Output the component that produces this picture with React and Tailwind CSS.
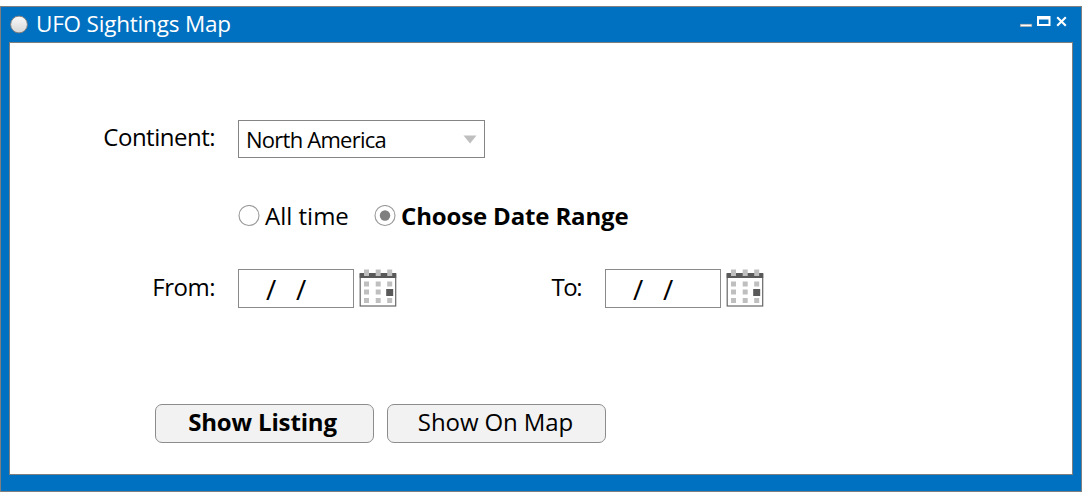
import React from "react";

function CalendarIcon() {
  return (
    <svg width="38" height="39" viewBox="0 0 38 39" className="ml-[5px] block shrink-0">
      <rect x="1.2" y="5" width="35.5" height="32" fill="#fff" stroke="#666" strokeWidth="1.2" />
      <rect x="0.7" y="4" width="36.5" height="5" fill="#595959" />
      {[5, 16.7, 28.2].map((x) => (
        <React.Fragment key={x}>
          <rect x={x} y="0.5" width="5" height="6.5" fill="#bfbfbf" />
          {[12.5, 20.5, 29].map((y) => (
            <rect key={y} x={x} y={y} width="5" height="5" fill="#bfbfbf" />
          ))}
        </React.Fragment>
      ))}
      <rect x="27.2" y="20" width="7" height="7" fill="#595959" />
    </svg>
  );
}

function DateField() {
  return (
    <div className="flex h-[39px]">
      <div className="flex h-[39px] w-[116px] border border-[#8a8a8a] bg-white pl-[27px] pt-[3px] text-[28px] leading-[32px]">
        <span className="w-[30px]">/</span>
        <span>/</span>
      </div>
      <CalendarIcon />
    </div>
  );
}

function Radio({ checked }) {
  return (
    <svg width="22" height="22" viewBox="0 0 22 22" className="block shrink-0">
      <circle cx="11" cy="10.5" r="10" fill="#fff" stroke="#999" strokeWidth="1.1" />
      {checked && <circle cx="11" cy="10.5" r="5.2" fill="#7f7f7f" />}
    </svg>
  );
}

export default function App() {
  return (
    <div className="h-[492px] w-[1082px] overflow-hidden bg-white pt-[6px] font-['Open_Sans','Noto_Sans',sans-serif] text-[24px] leading-8 whitespace-nowrap text-black">
      <div className="flex h-[486px] flex-col border border-[#7f7f7f] bg-[#0070c0] px-2 pb-[16px]">
        <header className="flex h-[35px] shrink-0 items-center">
          <svg width="20" height="20" viewBox="0 0 20 20" className="block shrink-0">
            <defs>
              <linearGradient id="orb" x1="0" y1="0" x2="0" y2="1">
                <stop offset="0" stopColor="#fafafa" />
                <stop offset="1" stopColor="#d6d6d6" />
              </linearGradient>
            </defs>
            <circle cx="10" cy="9.5" r="8.4" fill="url(#orb)" stroke="#7f7f7f" />
          </svg>
          <h1 className="ml-[7px] h-[34px] text-[22.5px] tracking-[-0.2px] text-white">UFO Sightings Map</h1>
          <svg width="50" height="16" viewBox="1019 14 50 16" className="mr-[4px] mb-[5px] ml-auto block">
            <rect x="1020.3" y="24.2" width="11.5" height="2.4" fill="#fff" stroke="#a8a29c" strokeWidth="0.6" />
            <path d="M1037 16h13.500v10h-13.500zM1039 19.500v4.500h9.500v-4.500z" fill="#fff" fillRule="evenodd" />
            <path d="M1057.200 17.200l8.600 8.600M1065.800 17.200l-8.600 8.600" stroke="#fff" strokeWidth="2.1" />
          </svg>
        </header>
        <main className="flex-1 border border-[#7f7f7f] bg-white pt-[77px]">
          <div className="flex h-[38px]">
            <div className="w-[205px] pt-[1px] text-right tracking-[-0.5px]">Continent:</div>
            <div className="ml-[23px] flex h-[38px] w-[247px] items-center justify-between border border-[#858585] pr-[7px] pl-[7px] text-[22px]">
              <span className="pb-[1px] tracking-[-0.75px]">North America</span>
              <svg width="14" height="9" viewBox="0 0 14 9" className="block">
                <path d="M0.5 0.5h13L7 8.500z" fill="#bfbfbf" />
              </svg>
            </div>
          </div>
          <div className="mt-[42px] ml-[228px] flex h-8 items-center">
            <Radio />
            <span className="ml-[5px] w-[109px]">All time</span>
            <Radio checked />
            <span className="ml-[5px] font-bold tracking-[-0.15px]">Choose Date Range</span>
          </div>
          <div className="mt-[37px] flex h-[39px]">
            <div className="w-[205px] pt-[2px] text-right tracking-[-0.5px]">From:</div>
            <div className="ml-[23px]"><DateField /></div>
            <div className="w-[184px] pt-[2px] text-right tracking-[-1.5px]">To:</div>
            <div className="ml-[24px]"><DateField /></div>
          </div>
          <div className="mt-[96px] ml-[145px] flex gap-[13px]">
            <button className="h-[39px] w-[219px] rounded-[7px] border border-[#8c8c8c] bg-[#f2f2f2] pr-1 pb-[3px] font-bold leading-8 tracking-[-0.15px]">Show Listing</button>
            <button className="h-[39px] w-[219px] rounded-[7px] border border-[#8c8c8c] bg-[#f2f2f2] pr-[2px] pb-[3px] leading-8 tracking-[-0.1px]">Show On Map</button>
          </div>
        </main>
      </div>
    </div>
  );
}
